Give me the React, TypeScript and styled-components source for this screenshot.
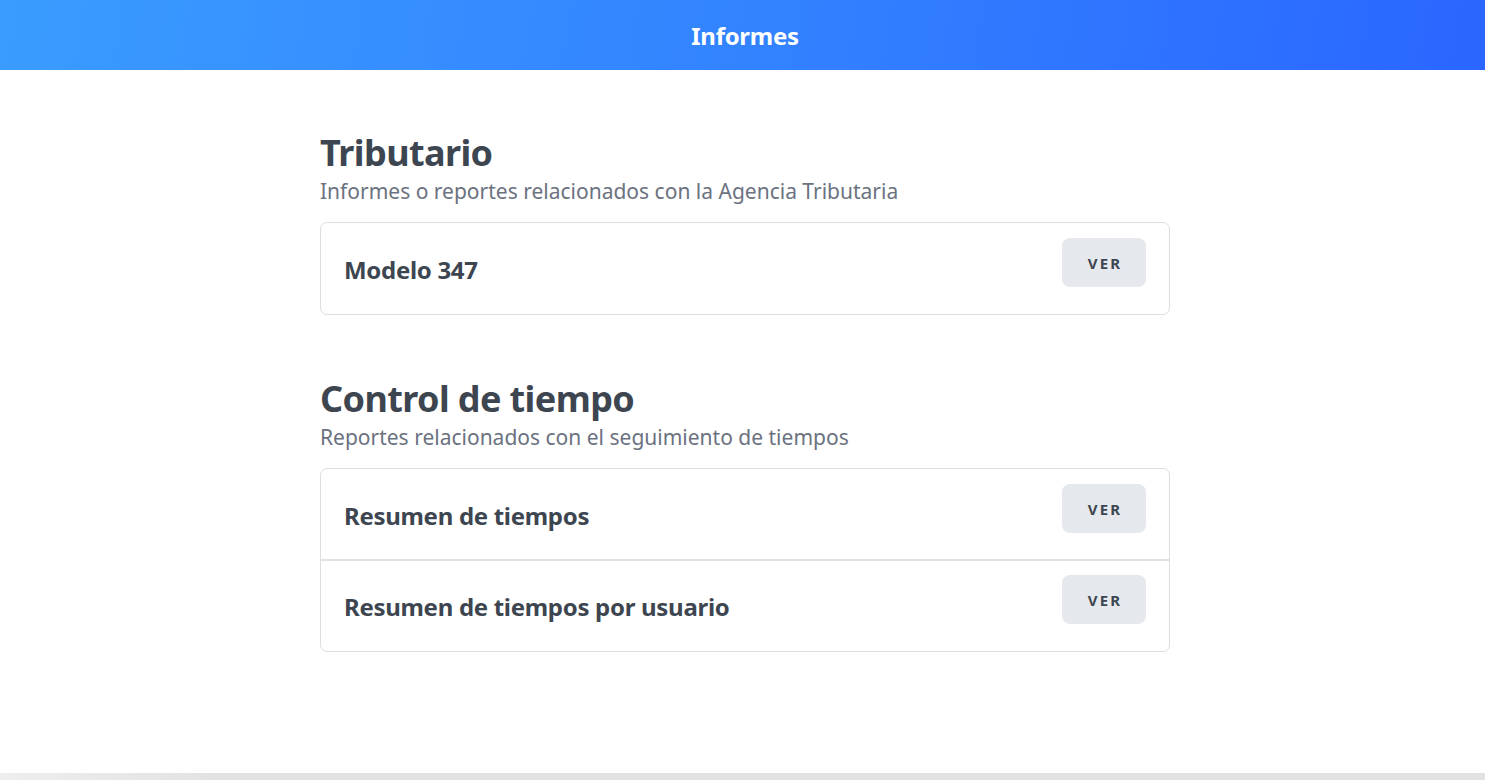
import React from "react";
import styled, { createGlobalStyle } from "styled-components";

const GlobalStyle = createGlobalStyle`
  html, body { margin: 0; padding: 0; background: #fff; }
  body { font-family: "Noto Sans", "Open Sans", sans-serif; color: #3d4650; }
  * { box-sizing: border-box; }
`;

const Page = styled.div`
  min-height: 100vh;
  display: flex;
  flex-direction: column;
`;

const Header = styled.header`
  height: 70px;
  display: flex;
  align-items: center;
  justify-content: center;
  padding-left: 5px;
  background: linear-gradient(100deg, #3a9cff 0%, #3383ff 50%, #2a66ff 100%);
`;

const HeaderTitle = styled.h1`
  margin: 0;
  color: #fff;
  font-size: 24px;
  font-weight: 700;
  letter-spacing: -0.3px;
`;

const Main = styled.main`
  flex: 1;
  width: 850px;
  margin: 0 auto;
  padding-left: 5px;
  box-sizing: content-box;
  display: flex;
  flex-direction: column;
`;

const Section = styled.section`
  margin-top: 62px;
  &:first-child { margin-top: 61px; }
`;

const SectionTitle = styled.h2`
  margin: 0;
  font-size: 36px;
  line-height: 44px;
  font-weight: 700;
  color: #3d4650;
  letter-spacing: -0.6px;
`;

const SectionSubtitle = styled.p`
  margin: 2px 0 17px;
  font-size: 21px;
  line-height: 28px;
  color: #6b7280;
  letter-spacing: 0;
`;

const Card = styled.div`
  border: 1px solid #dcdee2;
  border-radius: 7px;
  background: #fff;
`;

const Row = styled.div`
  height: 90px;
  display: flex;
  justify-content: space-between;
  align-items: flex-start;
  padding: 15px 23px 0 23px;
  &:only-child { height: 91px; }
  & + & { border-top: 2px solid #dfe1e4; height: 92px; padding-top: 14px; }
`;

const RowTitle = styled.span`
  margin-top: 17px;
  font-size: 24px;
  line-height: 30px;
  font-weight: 700;
  color: #3d4650;
  letter-spacing: -0.3px;
`;

const Button = styled.button`
  width: 84px;
  height: 49px;
  border: none;
  border-radius: 8px;
  background: #e5e8ed;
  color: #3d4650;
  font-family: inherit;
  font-weight: 700;
  font-size: 15px;
  letter-spacing: 2.2px;
  padding: 0 0 0 2px;
  cursor: pointer;
`;

const Footer = styled.div`
  height: 7px;
  background: linear-gradient(90deg, #eeeef0 0%, #e2e2e2 15%, #e2e2e2 100%);
`;

const sections = [
  {
    title: "Tributario",
    subtitle: "Informes o reportes relacionados con la Agencia Tributaria",
    items: ["Modelo 347"],
  },
  {
    title: "Control de tiempo",
    subtitle: "Reportes relacionados con el seguimiento de tiempos",
    items: ["Resumen de tiempos", "Resumen de tiempos por usuario"],
  },
];

export default function App() {
  return (
    <>
      <GlobalStyle />
      <Page>
        <Header>
          <HeaderTitle>Informes</HeaderTitle>
        </Header>
        <Main>
          {sections.map((s) => (
            <Section key={s.title}>
              <SectionTitle>{s.title}</SectionTitle>
              <SectionSubtitle>{s.subtitle}</SectionSubtitle>
              <Card>
                {s.items.map((it) => (
                  <Row key={it}>
                    <RowTitle>{it}</RowTitle>
                    <Button>VER</Button>
                  </Row>
                ))}
              </Card>
            </Section>
          ))}
        </Main>
        <Footer />
      </Page>
    </>
  );
}
